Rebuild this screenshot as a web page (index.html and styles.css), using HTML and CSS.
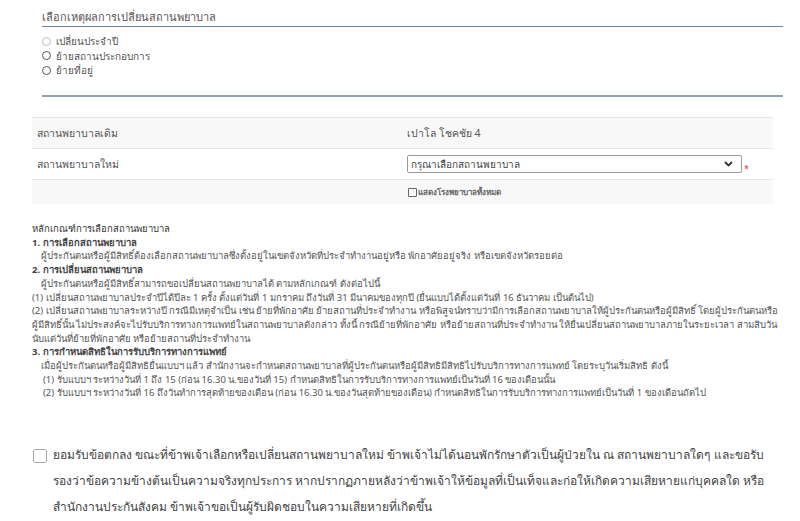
FILE: index.html
```html
<!DOCTYPE html>
<html lang="th">
<head>
  <meta charset="UTF-8">
  <meta name="viewport" content="width=device-width, initial-scale=1.0">
  <title>เปลี่ยนสถานพยาบาล</title>
  <link rel="stylesheet" href="styles.css">
</head>
<body>
  <div class="reason-box">
    <div class="reason-title">เลือกเหตุผลการเปลี่ยนสถานพยาบาล</div>
    <ul class="reason-list">
      <li class="disabled"><span class="radio"></span>เปลี่ยนประจำปี</li>
      <li><span class="radio"></span>ย้ายสถานประกอบการ</li>
      <li><span class="radio"></span>ย้ายที่อยู่</li>
    </ul>
  </div>

  <div class="hospital-table">
    <div class="row shaded">
      <div class="cell-label">สถานพยาบาลเดิม</div>
      <div class="cell-value">เปาโล โชคชัย 4</div>
    </div>
    <div class="row">
      <div class="cell-label">สถานพยาบาลใหม่</div>
      <div class="cell-value">
        <div class="select-box">
          <span>กรุณาเลือกสถานพยาบาล</span>
          <svg class="chevron" width="9" height="6" viewBox="0 0 9 6"><path d="M1 1l3.5 3.5L8 1" fill="none" stroke="#333" stroke-width="1.8"/></svg>
        </div>
        <span class="required">*</span>
      </div>
    </div>
    <div class="row shaded short">
      <div class="cell-label"></div>
      <div class="cell-value"><label class="show-all"><span class="box"></span>แสดงโรงพยาบาลทั้งหมด</label></div>
    </div>
  </div>

  <div class="criteria">
    <div class="criteria-title">หลักเกณฑ์การเลือกสถานพยาบาล</div>
    <div class="head">1. การเลือกสถานพยาบาล</div>
    <div class="indent">ผู้ประกันตนหรือผู้มีสิทธิ์ต้องเลือกสถานพยาบาลซึ่งตั้งอยู่ในเขตจังหวัดที่ประจำทำงานอยู่หรือ พักอาศัยอยู่จริง หรือเขตจังหวัดรอยต่อ</div>
    <div class="head">2. การเปลี่ยนสถานพยาบาล</div>
    <div class="indent">ผู้ประกันตนหรือผู้มีสิทธิ์สามารถขอเปลี่ยนสถานพยาบาลได้ ตามหลักเกณฑ์ ดังต่อไปนี้</div>
    <div>(1) เปลี่ยนสถานพยาบาลประจำปีได้ปีละ 1 ครั้ง ตั้งแต่วันที่ 1 มกราคม ถึงวันที่ 31 มีนาคมของทุกปี (ยื่นแบบได้ตั้งแต่วันที่ 16 ธันวาคม เป็นต้นไป)</div>
    <div>(2) เปลี่ยนสถานพยาบาลระหว่างปี กรณีมีเหตุจำเป็น เช่น ย้ายที่พักอาศัย ย้ายสถานที่ประจำทำงาน หรือพิสูจน์ทราบว่ามีการเลือกสถานพยาบาลให้ผู้ประกันตนหรือผู้มีสิทธิ์ โดยผู้ประกันตนหรือผู้มีสิทธิ์นั้น ไม่ประสงค์จะไปรับบริการทางการแพทย์ในสถานพยาบาลดังกล่าว ทั้งนี้ กรณีย้ายที่พักอาศัย หรือย้ายสถานที่ประจำทำงาน ให้ยื่นเปลี่ยนสถานพยาบาลภายในระยะเวลา สามสิบวันนับแต่วันที่ย้ายที่พักอาศัย หรือย้ายสถานที่ประจำทำงาน</div>
    <div class="head">3. การกำหนดสิทธิในการรับบริการทางการแพทย์</div>
    <div class="indent">เมื่อผู้ประกันตนหรือผู้มีสิทธิยื่นแบบฯ แล้ว สำนักงานจะกำหนดสถานพยาบาลที่ผู้ประกันตนหรือผู้มีสิทธิมีสิทธิไปรับบริการทางการแพทย์ โดยระบุวันเริ่มสิทธิ ดังนี้</div>
    <div class="indent-more">(1) รับแบบฯ ระหว่างวันที่ 1 ถึง 15 (ก่อน 16.30 น.ของวันที่ 15) กำหนดสิทธิในการรับบริการทางการแพทย์เป็นวันที่ 16 ของเดือนนั้น</div>
    <div class="indent-more">(2) รับแบบฯ ระหว่างวันที่ 16 ถึงวันทำการสุดท้ายของเดือน (ก่อน 16.30 น.ของวันสุดท้ายของเดือน) กำหนดสิทธิในการรับบริการทางการแพทย์เป็นวันที่ 1 ของเดือนถัดไป</div>
  </div>

  <div class="agreement">
    <span class="agree-box"></span>
    <p>ยอมรับข้อตกลง ขณะที่ข้าพเจ้าเลือกหรือเปลี่ยนสถานพยาบาลใหม่ ข้าพเจ้าไม่ได้นอนพักรักษาตัวเป็นผู้ป่วยใน ณ สถานพยาบาลใดๆ และขอรับรองว่าข้อความข้างต้นเป็นความจริงทุกประการ หากปรากฏภายหลังว่าข้าพเจ้าให้ข้อมูลที่เป็นเท็จและก่อให้เกิดความเสียหายแก่บุคคลใด หรือสำนักงานประกันสังคม ข้าพเจ้าขอเป็นผู้รับผิดชอบในความเสียหายที่เกิดขึ้น</p>
  </div>
</body>
</html>
```

FILE: styles.css
```css
body {
  margin: 0;
  padding: 0;
  font-family: "Noto Sans", sans-serif;
  color: #555;
  background: #fff;
  width: 800px;
}
.reason-box {
  margin: 0 17px 0 42px;
  padding-top: 8px;
  border-bottom: 2px solid #8ea2b6;
  height: 87px;
}
.reason-title {
  font-size: 11px;
  line-height: 17px;
  border-bottom: 1px solid #6f89a3;
  padding-bottom: 1px;
}
.reason-list {
  list-style: none;
  margin: 7px 0 0;
  padding: 0;
  font-size: 10px;
  line-height: 14.5px;
}
.reason-list li {
  display: flex;
  align-items: center;
}
.radio {
  width: 7px;
  height: 7px;
  border: 1px solid #555;
  border-radius: 50%;
  margin: 0 5px 0 0;
  display: inline-block;
}
.reason-list li.disabled .radio {
  border-color: #bbb;
}
.hospital-table {
  margin: 20px 27px 0 32px;
  font-size: 10.5px;
}
.row {
  display: flex;
  height: 30px;
  align-items: center;
  border-top: 1px solid #e6e6e6;
}
.row.shaded {
  background: #f8f8f8;
}
.row.short {
  height: 24px;
}
.cell-label {
  width: 370px;
  padding-left: 5px;
}
.cell-value {
  flex: 1;
  display: flex;
  align-items: center;
}
.select-box {
  width: 322px;
  height: 16px;
  border: 1px solid #999;
  border-radius: 2px;
  background: #fff;
  display: flex;
  align-items: center;
  justify-content: space-between;
  padding: 0 8px 0 3px;
  box-sizing: content-box;
  font-size: 10px;
  color: #444;
}
.required {
  color: #d33;
  font-size: 9px;
  margin-left: 2px;
  align-self: flex-start;
  margin-top: 8px;
}
.show-all {
  display: flex;
  align-items: center;
  font-size: 8px;
  font-weight: bold;
  color: #666;
  margin-left: 1px;
}
.show-all .box {
  width: 7px;
  height: 7px;
  border: 1px solid #666;
  border-radius: 1px;
  margin-right: 1px;
}
.criteria {
  margin: 18px 20px 0 32px;
  font-size: 9.5px;
  line-height: 13.7px;
  color: #555;
}
.criteria-title {
  color: #333;
}
.criteria .head {
  font-weight: bold;
  color: #444;
}
.criteria .indent {
  padding-left: 9px;
}
.criteria .indent-more {
  padding-left: 11px;
}
.agreement {
  display: flex;
  align-items: flex-start;
  margin: 42px 20px 0 33px;
}
.agree-box {
  flex: none;
  width: 12px;
  height: 12px;
  border: 1px solid #aaa;
  border-radius: 2px;
  margin-top: 7px;
  margin-right: 6px;
}
.agreement p {
  margin: 0;
  font-size: 12px;
  line-height: 26px;
  color: #444;
}
```
